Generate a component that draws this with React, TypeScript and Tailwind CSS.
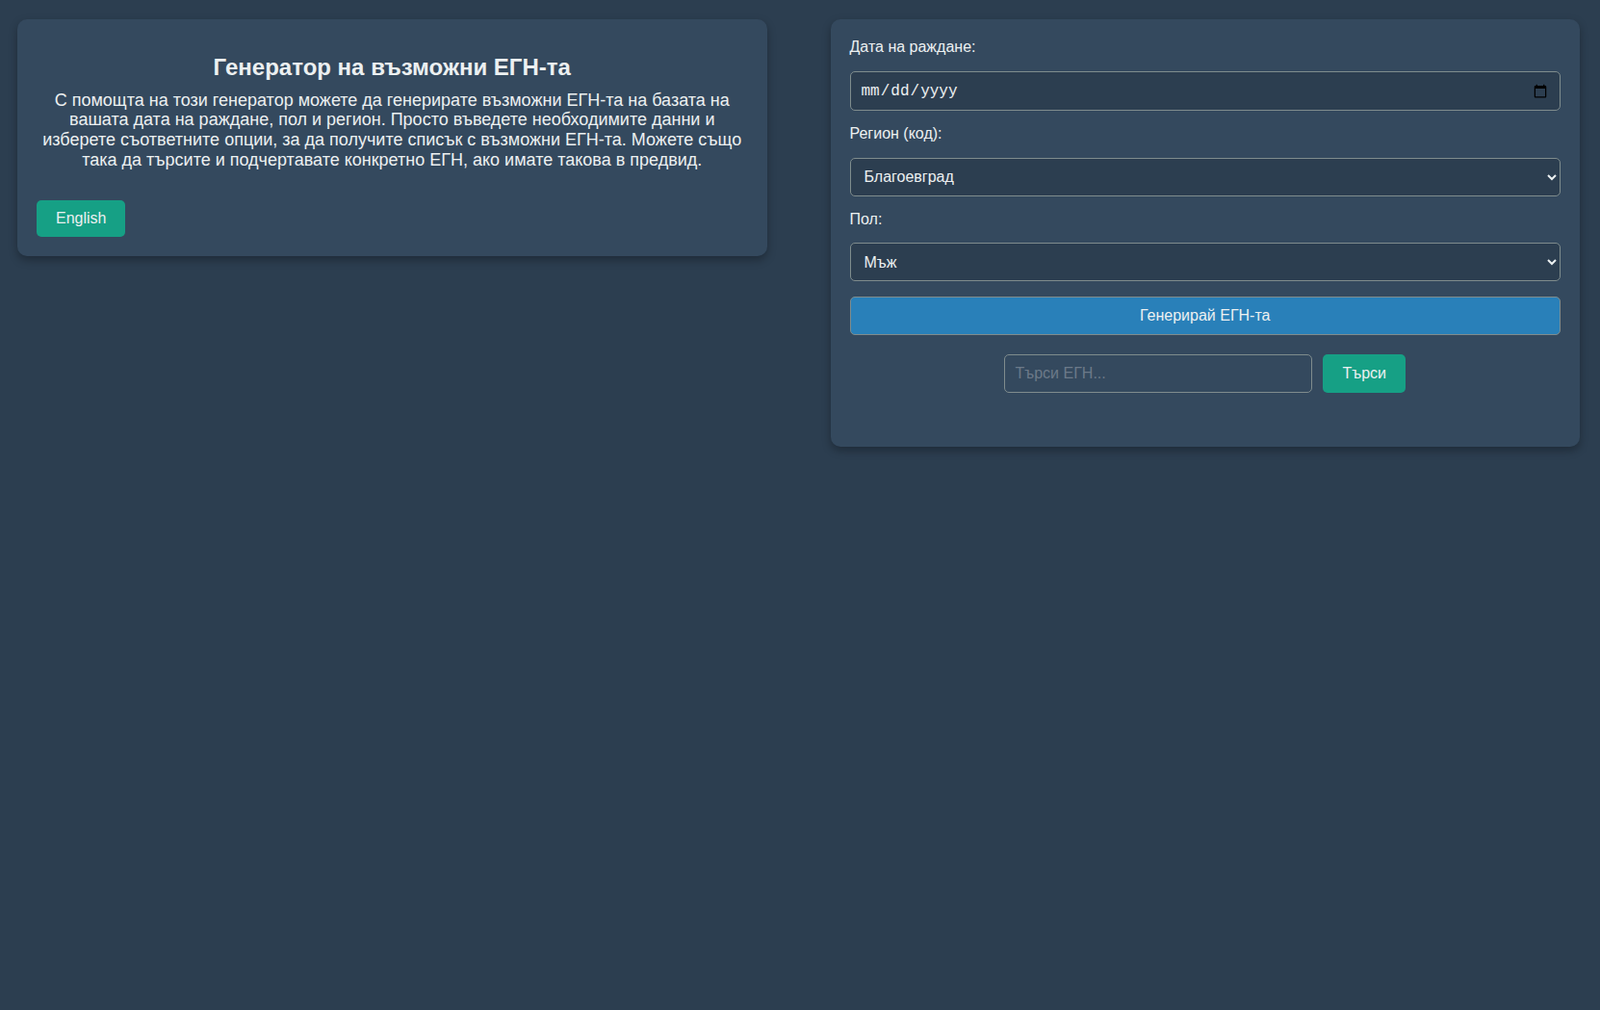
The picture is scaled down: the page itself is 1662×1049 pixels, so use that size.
import React from "react";

export default function App() {
  return (
    <div
      className="min-h-[1049px] w-full bg-[#2c3e50] text-[#ecf0f1]"
      style={{ fontFamily: '"Liberation Sans", Arial, sans-serif' }}
    >
      <div className="flex items-start gap-[66px] pl-[18px] pr-[21px] pt-[20px]">
        {/* Left card */}
        <div className="flex-1 rounded-[10px] bg-[#34495e] p-[20px] shadow-[0_4px_10px_rgba(0,0,0,0.3)]">
          <h2 className="mt-[16px] mb-[10px] text-center text-[24px] font-bold leading-[27.6px] text-[#ecf0f1]">
            Генератор на възможни ЕГН-та
          </h2>
          <p className="text-center text-[18px] leading-[20.7px] text-[#ecf0f1]">
            С помощта на този генератор можете да генерирате възможни ЕГН-та на базата на
            вашата дата на раждане, пол и регион. Просто въведете необходимите данни и
            изберете съответните опции, за да получите списък с възможни ЕГН-та. Можете също
            така да търсите и подчертавате конкретно ЕГН, ако имате такова в предвид.
          </p>
          <button className="mt-[32px] h-[38px] rounded-[5px] bg-[#16a085] px-[20px] text-[16px] leading-[18.4px] text-[#ecf0f1]">
            English
          </button>
        </div>

        {/* Right card */}
        <div className="flex-1 rounded-[10px] bg-[#34495e] p-[20px] shadow-[0_4px_10px_rgba(0,0,0,0.3)]">
          <label className="mb-[16px] block text-[16px] leading-[18.4px] text-[#ecf0f1]">
            Дата на раждане:
          </label>
          <input
            type="date"
            className="mb-[15px] block h-[41px] w-full rounded-[5px] border border-[#7f8c8d] bg-[#2c3e50] px-[10px] text-[16px] text-[#ecf0f1]"
            style={{ fontFamily: '"Liberation Mono", "Courier New", monospace', colorScheme: "light" }}
          />
          <label className="mb-[15px] block text-[16px] leading-[18.4px] text-[#ecf0f1]">
            Регион (код):
          </label>
          <select
            className="mb-[15px] block h-[40px] w-full rounded-[5px] border border-[#7f8c8d] bg-[#2c3e50] px-[10px] text-[16px] text-[#ecf0f1]"
            defaultValue="blg"
          >
            <option value="blg">Благоевград</option>
            <option value="bgs">Бургас</option>
            <option value="vrn">Варна</option>
          </select>
          <label className="mb-[15px] block text-[16px] leading-[18.4px] text-[#ecf0f1]">
            Пол:
          </label>
          <select
            className="mb-[16px] block h-[40px] w-full rounded-[5px] border border-[#7f8c8d] bg-[#2c3e50] px-[10px] text-[16px] text-[#ecf0f1]"
            defaultValue="m"
          >
            <option value="m">Мъж</option>
            <option value="f">Жена</option>
          </select>
          <button className="block h-[40px] w-full rounded-[5px] border border-[#7f8c8d] bg-[#2980b9] text-[16px] text-[#ecf0f1]">
            Генерирай ЕГН-та
          </button>
          <div className="mt-[20px] mb-[36px] flex items-center justify-center gap-[11px]">
            <input
              type="text"
              placeholder="Търси ЕГН..."
              className="h-[40px] w-[320px] rounded-[5px] border border-[#7f8c8d] bg-[#34495e] px-[10px] text-[16px] text-[#ecf0f1] placeholder:text-[#6c7a89]"
            />
            <button className="h-[40px] rounded-[5px] bg-[#16a085] px-[20px] text-[16px] text-[#ecf0f1]">
              Търси
            </button>
          </div>
        </div>
      </div>
    </div>
  );
}
